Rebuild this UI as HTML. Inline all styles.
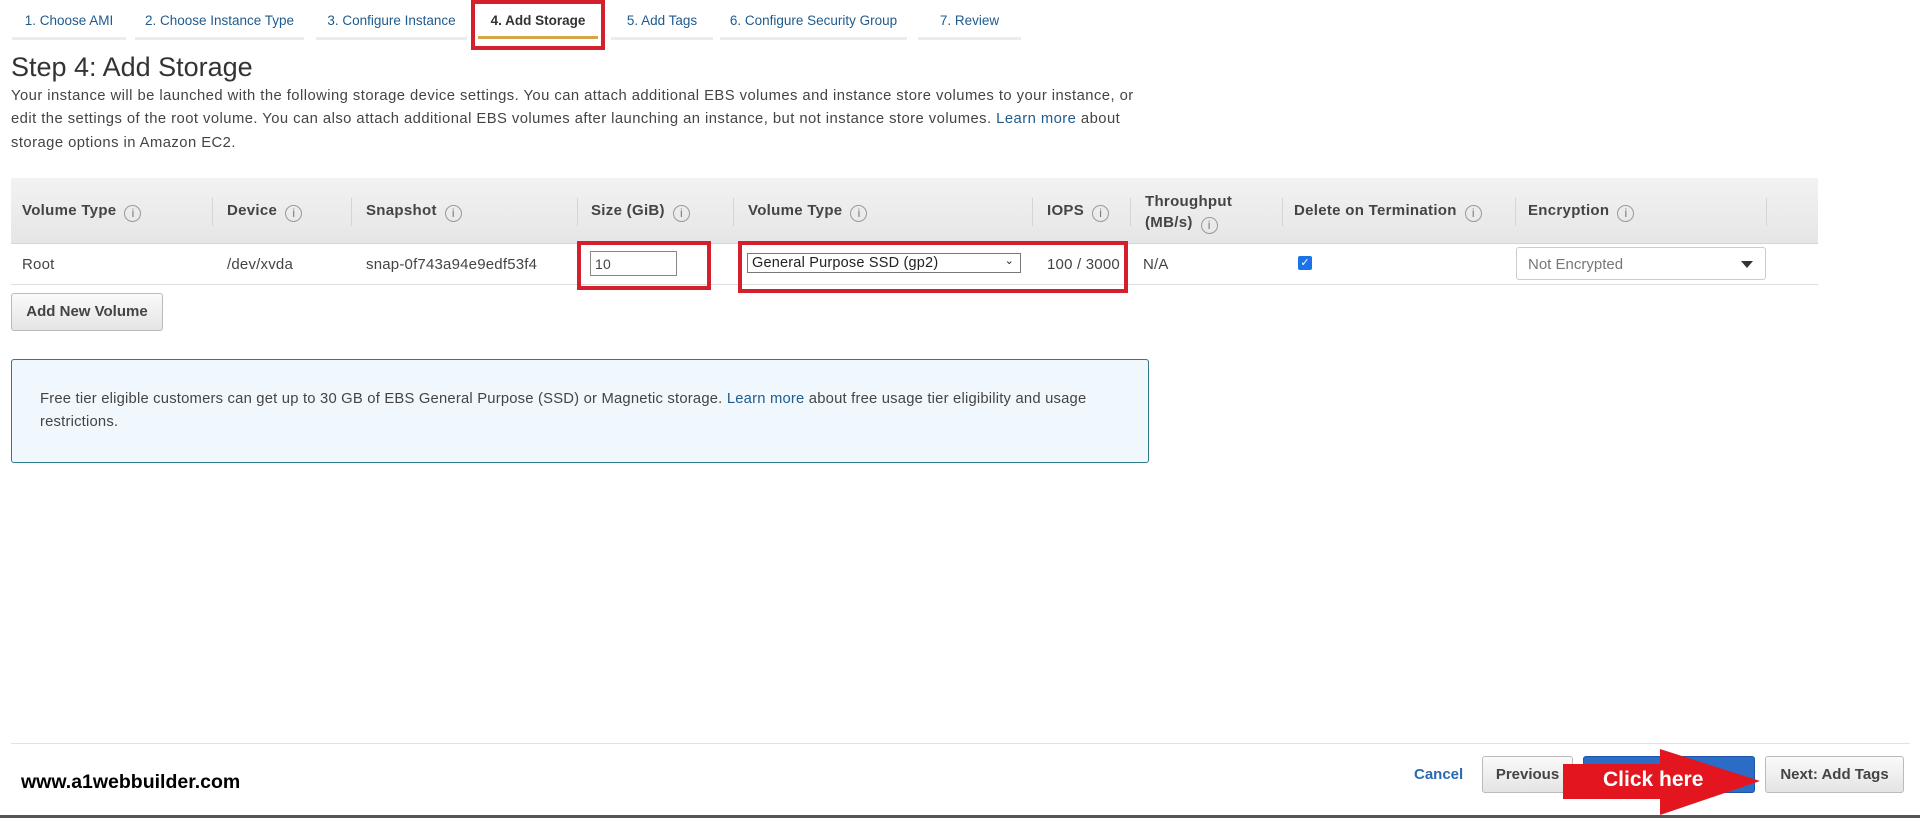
<!DOCTYPE html>
<html><head><meta charset="utf-8"><style>
*{box-sizing:border-box;margin:0;padding:0}
body{width:1920px;height:818px;position:relative;background:#fff;font-family:"Liberation Sans",Arial,sans-serif;color:#333;overflow:hidden}
.a{position:absolute;white-space:nowrap}
.tab{position:absolute;top:0;height:40px;font-size:13.5px;color:#1e5b8f;text-align:center;line-height:42px;border-bottom:3px solid #eaeded;white-space:nowrap}
.h{font-size:15px;font-weight:bold;color:#444;letter-spacing:0.3px}
.i{display:inline-block;width:17px;height:17px;border:1px solid #999;border-radius:50%;font-size:12px;line-height:15px;text-align:center;color:#777;font-weight:normal;margin-left:8px;vertical-align:-2px;letter-spacing:0}
.sep{position:absolute;top:198px;width:1px;height:28px;background:#d5d5d5}
.td{font-size:15px;color:#444;letter-spacing:0.2px}
.btn{position:absolute;border:1px solid #bbb;border-radius:3px;background:linear-gradient(#fafafa,#e4e4e4);font-size:15px;font-weight:bold;color:#444;text-align:center}
.red{position:absolute;border:4px solid #d3202c}
</style></head><body>
<div class="tab" style="left:12px;width:114px">1. Choose AMI</div>
<div class="tab" style="left:135px;width:169px">2. Choose Instance Type</div>
<div class="tab" style="left:316px;width:151px">3. Configure Instance</div>
<div class="tab" style="left:478px;width:120px;font-weight:bold;color:#333;border-bottom:3px solid #d5a54a;height:39px">4. Add Storage</div>
<div class="tab" style="left:611px;width:102px">5. Add Tags</div>
<div class="tab" style="left:720px;width:187px">6. Configure Security Group</div>
<div class="tab" style="left:918px;width:103px">7. Review</div>
<div class="red" style="left:471px;top:0;width:134px;height:50px"></div>

<div class="a" style="left:11px;top:52px;font-size:27px;color:#333">Step 4: Add Storage</div>
<div class="a" style="left:11px;top:85px;font-size:14.8px;line-height:23.3px;color:#444;white-space:normal;width:1140px;letter-spacing:0.45px">Your instance will be launched with the following storage device settings. You can attach additional EBS volumes and instance store volumes to your instance, or edit the settings of the root volume. You can also attach additional EBS volumes after launching an instance, but not instance store volumes. <span style="color:#1e5b8f">Learn more</span> about storage options in Amazon EC2.</div>

<div class="a" style="left:11px;top:178px;width:1807px;height:66px;background:linear-gradient(#f2f2f2,#e6e6e6);border-bottom:1px solid #d5d5d5"></div>
<div class="sep" style="left:212px"></div><div class="sep" style="left:351px"></div><div class="sep" style="left:577px"></div><div class="sep" style="left:733px"></div><div class="sep" style="left:1032px"></div><div class="sep" style="left:1130px"></div><div class="sep" style="left:1282px"></div><div class="sep" style="left:1515px"></div><div class="sep" style="left:1766px"></div>
<div class="a h" style="left:22px;top:202px">Volume Type<span class="i">i</span></div>
<div class="a h" style="left:227px;top:202px">Device<span class="i">i</span></div>
<div class="a h" style="left:366px;top:202px">Snapshot<span class="i">i</span></div>
<div class="a h" style="left:591px;top:202px">Size (GiB)<span class="i">i</span></div>
<div class="a h" style="left:748px;top:202px">Volume Type<span class="i">i</span></div>
<div class="a h" style="left:1047px;top:202px">IOPS<span class="i">i</span></div>
<div class="a h" style="left:1145px;top:191px;line-height:21px">Throughput<br>(MB/s)<span class="i">i</span></div>
<div class="a h" style="left:1294px;top:202px">Delete on Termination<span class="i">i</span></div>
<div class="a h" style="left:1528px;top:202px">Encryption<span class="i">i</span></div>

<div class="a" style="left:11px;top:284px;width:1807px;height:1px;background:#ddd"></div>
<div class="a td" style="left:22px;top:256px">Root</div>
<div class="a td" style="left:227px;top:256px">/dev/xvda</div>
<div class="a td" style="left:366px;top:256px">snap-0f743a94e9edf53f4</div>
<div class="a td" style="left:590px;top:251px;width:87px;height:25px;border:1px solid #888;padding:4px 4px;font-size:14px">10</div>
<div class="red" style="left:577px;top:241px;width:134px;height:49px"></div>
<div class="a td" style="left:747px;top:253px;width:274px;height:20px;border:1px solid #777;padding:1px 4px;font-size:14.5px;color:#222">General Purpose SSD (gp2)<span style="position:absolute;right:6px;top:0;font-size:11px">&#8964;</span></div>
<div class="a td" style="left:1047px;top:256px">100 / 3000</div>
<div class="red" style="left:738px;top:241px;width:390px;height:52px"></div>
<div class="a td" style="left:1143px;top:256px">N/A</div>
<div class="a" style="left:1298px;top:256px;width:14px;height:14px;background:#1a73e8;border-radius:2px;color:#fff;font-size:11px;line-height:14px;text-align:center">&#10003;</div>
<div class="a" style="left:1516px;top:247px;width:250px;height:33px;border:1px solid #ccc;border-radius:3px;font-size:15px;color:#777;padding:8px 11px">Not Encrypted<span style="position:absolute;right:12px;top:13px;border:6px solid transparent;border-top:7px solid #333;border-bottom:0"></span></div>

<div class="btn" style="left:11px;top:293px;width:152px;height:38px;line-height:36px">Add New Volume</div>

<div class="a" style="left:11px;top:359px;width:1138px;height:104px;border:1px solid #2d7a8a;border-radius:3px;background:#f0f8fe"></div>
<div class="a" style="left:40px;top:388px;font-size:14.8px;line-height:23.3px;color:#444;white-space:normal;width:1090px;letter-spacing:0.2px">Free tier eligible customers can get up to 30 GB of EBS General Purpose (SSD) or Magnetic storage. <span style="color:#1e5b8f">Learn more</span> about free usage tier eligibility and usage restrictions.</div>

<div class="a" style="left:11px;top:743px;width:1899px;height:1px;background:#e2e2e2"></div>
<div class="a" style="left:0;top:815px;width:1920px;height:3px;background:#555"></div>
<div class="a" style="left:21px;top:771px;font-size:19.5px;font-weight:bold;color:#000">www.a1webbuilder.com</div>
<div class="a" style="left:1414px;top:766px;font-size:15px;font-weight:bold;color:#2a6ab0">Cancel</div>
<div class="btn" style="left:1482px;top:756px;width:91px;height:37px;line-height:35px">Previous</div>
<div class="a" style="left:1583px;top:756px;width:172px;height:37px;border-radius:3px;background:#2a6cc6;border:1px solid #1e56a8"></div>
<div class="btn" style="left:1765px;top:756px;width:139px;height:37px;line-height:35px">Next: Add Tags</div>
<svg class="a" style="left:0;top:0" width="1920" height="818"><polygon points="1563,764 1660,764 1660,749 1760,781 1660,815 1660,799 1563,799" fill="#e3161f"/></svg>
<div class="a" style="left:1603px;top:768px;font-size:21px;font-weight:bold;color:#fff">Click here</div>
</body></html>
